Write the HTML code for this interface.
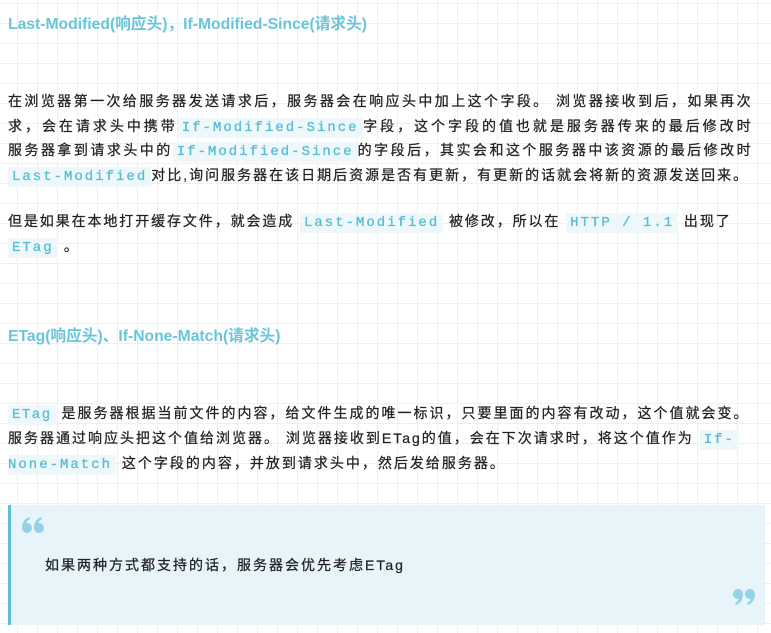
<!DOCTYPE html>
<html><head><meta charset="utf-8"><style>
html,body{margin:0;padding:0}
body{width:771px;height:633px;overflow:hidden;position:relative;background-color:#fff;
background-image:linear-gradient(to right,#e6f1fa 1px,transparent 1px),linear-gradient(to bottom,#e6f1fa 1px,transparent 1px);
background-size:20px 20px;background-position:17px 3px;
font-family:"Liberation Sans","Noto Sans CJK SC",sans-serif;color:#222;}
.h{position:absolute;left:8px;font-weight:bold;font-size:15.7px;color:#6ac5da;white-space:nowrap;line-height:20px}
.l{position:absolute;left:8px;font-size:14px;letter-spacing:2.4px;white-space:nowrap;line-height:24px;-webkit-text-stroke:0.25px #222}
.j{width:745px;text-align:justify;text-align-last:justify;white-space:normal;height:24px;overflow:hidden}
code{font-family:"Liberation Mono",monospace;font-size:14px;color:#56bdd5;background:#eef8fb;padding:2px 4px;letter-spacing:2px;-webkit-text-stroke:0.3px #56bdd5}
.q{position:absolute;left:8px;top:505px;width:754px;height:120px;background:#e7f5fb;border-left:3px solid #5fc0d6}
svg{position:absolute}
</style></head><body>
<div class="h" style="top:15px">Last-Modified(响应头)，If-Modified-Since(请求头)</div>
<div class="l j" style="top:89px">在浏览器第一次给服务器发送请求后，服务器会在响应头中加上这个字段。 浏览器接收到后，如果再次请</div>
<div class="l j" style="top:114px">求，会在请求头中携带<code>If-Modified-Since</code>字段，这个字段的值也就是服务器传来的最后修改时间。</div>
<div class="l j" style="top:138px">服务器拿到请求头中的<code>If-Modified-Since</code>的字段后，其实会和这个服务器中该资源的最后修改时间</div>
<div class="l" style="top:163px;letter-spacing:2px"><code>Last-Modified</code>对比,询问服务器在该日期后资源是否有更新，有更新的话就会将新的资源发送回来。</div>
<div class="l" style="top:209px;letter-spacing:1.9px">但是如果在本地打开缓存文件，就会造成 <code>Last-Modified</code> 被修改，所以在 <code>HTTP / 1.1</code> 出现了</div>
<div class="l" style="top:234px"><code>ETag</code> 。</div>
<div class="h" style="top:327px">ETag(响应头)、If-None-Match(请求头)</div>
<div class="l" style="top:401px;letter-spacing:2px"><code style="letter-spacing:1.5px">ETag</code> 是服务器根据当前文件的内容，给文件生成的唯一标识，只要里面的内容有改动，这个值就会变。</div>
<div class="l" style="top:426px;letter-spacing:2px">服务器通过响应头把这个值给浏览器。 浏览器接收到ETag的值，会在下次请求时，将这个值作为 <code style="letter-spacing:2px">If-</code></div>
<div class="l" style="top:451px;letter-spacing:2px"><code style="letter-spacing:2px;padding-left:0">None-Match</code> 这个字段的内容，并放到请求头中，然后发给服务器。</div>
<div class="q"></div>
<svg style="left:22px;top:517px" width="22" height="16" viewBox="0 0 22 16" fill="#92d3e5">
<circle cx="5" cy="11" r="5"/><path d="M0 11 Q0 3 7 0 L8 2 Q4 4 4 8 Z"/>
<circle cx="17" cy="11" r="5"/><path d="M12 11 Q12 3 19 0 L20 2 Q16 4 16 8 Z"/></svg>
<svg style="left:733px;top:589px" width="22" height="16" viewBox="0 0 22 16" fill="#92d3e5">
<circle cx="5" cy="5" r="5"/><path d="M10 5 Q10 13 3 16 L2 14 Q6 12 6 8 Z"/>
<circle cx="17" cy="5" r="5"/><path d="M22 5 Q22 13 15 16 L14 14 Q18 12 18 8 Z"/></svg>
<div class="l" style="left:45px;top:553px;font-size:14px;letter-spacing:2px">如果两种方式都支持的话，服务器会优先考虑ETag</div>
</body></html>
